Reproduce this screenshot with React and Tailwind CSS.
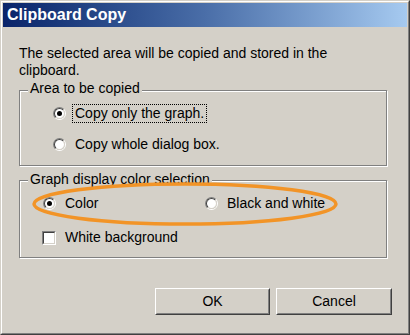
import React from "react";

function Radio({ checked }) {
  return (
    <div className="w-[13px] h-[13px] shrink-0 rounded-full border border-t-[#808080] border-l-[#808080] border-r-white border-b-white">
      <div className="w-full h-full rounded-full border border-t-[#404040] border-l-[#404040] border-r-[#d4d0c8] border-b-[#d4d0c8] bg-white flex items-center justify-center">
        {checked && <div className="w-[5px] h-[5px] rounded-full bg-black" />}
      </div>
    </div>
  );
}

function Checkbox() {
  return (
    <div className="w-[14px] h-[14px] shrink-0 border border-t-[#808080] border-l-[#808080] border-r-white border-b-white">
      <div className="w-full h-full border border-t-[#404040] border-l-[#404040] border-r-[#d4d0c8] border-b-[#d4d0c8] bg-white" />
    </div>
  );
}

function Label({ children, focus }) {
  return (
    <span
      className={
        "ml-[6px] px-[2px] leading-[17px] border " +
        (focus ? "border-dotted border-black" : "border-transparent")
      }
    >
      {children}
    </span>
  );
}

function Group({ title, legendTop, className, children }) {
  return (
    <div
      className={
        "relative border border-[#808080] shadow-[inset_1px_1px_0_#ffffff,1px_1px_0_#ffffff] " +
        className
      }
    >
      <span className={"absolute left-[8px] px-[2px] bg-[#d4d0c8] leading-[17px] " + legendTop}>
        {title}
      </span>
      {children}
    </div>
  );
}

function Button({ children, w }) {
  return (
    <div className={"h-[27px] border border-t-white border-l-white border-r-[#404040] border-b-[#404040] " + w}>
      <div className="w-full h-full border border-t-[#d4d0c8] border-l-[#d4d0c8] border-r-[#808080] border-b-[#808080] flex items-center justify-center">
        {children}
      </div>
    </div>
  );
}

export default function App() {
  return (
    <div className="relative w-[410px] h-[335px] bg-[#d4d0c8] border border-t-[#d4d0c8] border-l-[#d4d0c8] border-r-[#404040] border-b-[#404040] font-['Liberation_Sans',Arial,sans-serif] text-[14px] text-black overflow-hidden">
      <div className="w-full h-full border border-t-white border-l-white border-r-[#808080] border-b-[#808080] p-px flex flex-col">
        <div className="h-[24px] shrink-0 flex items-center pl-[4px] bg-gradient-to-r from-[#0a246a] via-[#4a6ea8] to-[#a6caf0]">
          <span className="text-white font-bold text-[16px] leading-[20px]">Clipboard Copy</span>
        </div>
        <div className="flex flex-col pl-[16px]">
          <p className="mt-[18px] leading-[17px]">
            The selected area will be copied and stored in the
            <br />
            clipboard.
          </p>
          <Group title="Area to be copied" legendTop="-top-[11px]" className="mt-[11px] w-[368px] h-[76px] pt-[13px] pl-[33px]">
            <div className="flex items-center h-[19px]">
              <Radio checked />
              <Label focus>Copy only the graph.</Label>
            </div>
            <div className="flex items-center h-[19px] mt-[12px]">
              <Radio />
              <Label>Copy whole dialog box.</Label>
            </div>
          </Group>
          <Group title="Graph display color selection" legendTop="-top-[10px]" className="mt-[14px] w-[368px] h-[78px] pt-[13px] pl-[23px]">
            <div className="flex items-center h-[19px]">
              <div className="flex items-center w-[162px]">
                <Radio checked />
                <Label>Color</Label>
              </div>
              <div className="flex items-center">
                <Radio />
                <Label>Black and white</Label>
              </div>
            </div>
            <div className="flex items-center h-[19px] mt-[15px] -ml-px">
              <Checkbox />
              <Label>White background</Label>
            </div>
          </Group>
          <div className="flex mt-[30px] ml-[136px] gap-[6px]">
            <Button w="w-[115px]">OK</Button>
            <Button w="w-[116px]">Cancel</Button>
          </div>
        </div>
      </div>
      <svg className="absolute left-[29px] top-[181px]" width="312" height="46" viewBox="0 0 312 46">
        <ellipse cx="155" cy="22" rx="151" ry="20" fill="none" stroke="#f29427" strokeWidth="3.5" />
      </svg>
    </div>
  );
}
